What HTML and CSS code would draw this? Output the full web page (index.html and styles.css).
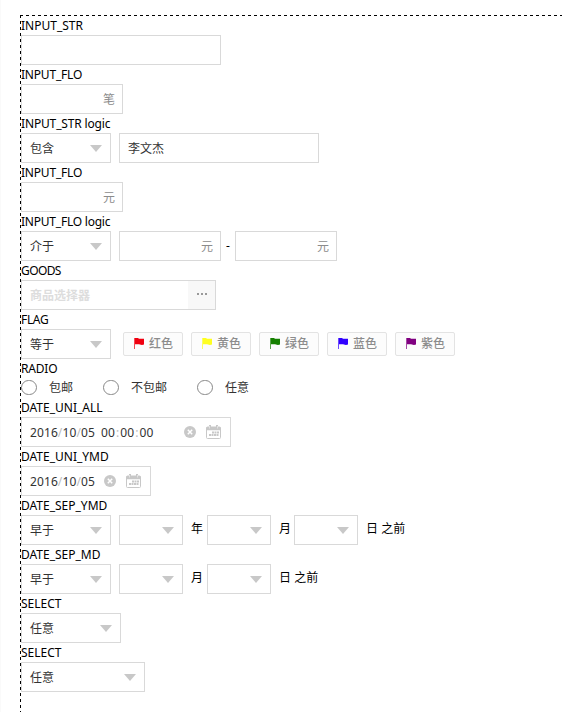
FILE: index.html
```html
<!DOCTYPE html>
<html lang="zh-CN">
<head>
<meta charset="utf-8">
<title>Filter</title>
<link rel="stylesheet" href="styles.css">
</head>
<body>
<svg class="defs" width="0" height="0" aria-hidden="true">
  <symbol id="flag" viewBox="0 0 10 11"><path d="M0 0h1v11H0z" opacity=".7"/><path d="M1 0H4L5 .8H10V6.500L8 7L5 6.200H1z"/></symbol>
  <symbol id="clear" viewBox="0 0 12 12"><circle cx="6" cy="6" r="6" fill="#c8c8c8"/><path d="M3.800 3.800l4.400 4.400M8.200 3.800L3.800 8.200" stroke="#fff" stroke-width="1.500"/></symbol>
  <symbol id="calendar" viewBox="0 0 15 14"><path d="M1.500 2h12a1 1 0 0 1 1 1v9.500a1 1 0 0 1-1 1h-12a1 1 0 0 1-1-1V3a1 1 0 0 1 1-1z" fill="#fff" stroke="#c8c8c8"/><path d="M.5 2h14v3.300H.5zM3 0h2v3H3zM10 0h2v3h-2z" fill="#c8c8c8"/><path d="M3.500 1v2.500M11.500 1v2.500" stroke="#eee" stroke-width=".7"/><path d="M6 6.500h2v2H6zM8.500 6.500h2v2h-2zM11 6.500h2v2h-2zM3 9h2v2H3zM5.500 9h2v2h-2zM8 9h2v2H8zM10.500 9h2v2h-2z" fill="#c8c8c8"/></symbol>
</svg>
<main class="panel">
  <div class="label">INPUT_STR</div>
  <div class="row"><div class="box text"></div></div>
  <div class="label flo">INPUT_FLO</div>
  <div class="row"><div class="box number">笔</div></div>
  <div class="label str-logic">INPUT_STR logic</div>
  <div class="row"><div class="box select">包含</div><div class="box text">李文杰</div></div>
  <div class="label flo">INPUT_FLO</div>
  <div class="row"><div class="box number">元</div></div>
  <div class="label flo-logic">INPUT_FLO logic</div>
  <div class="row"><div class="box select">介于</div><div class="box number">元</div><span class="dash">-</span><div class="box number">元</div></div>
  <div class="label goods-label">GOODS</div>
  <div class="row"><div class="box goods"><span>商品选择器</span><span class="more"><i></i><i></i><i></i></span></div></div>
  <div class="label flag-label">FLAG</div>
  <div class="row"><div class="box select">等于</div>
    <div class="tags">
      <span class="tag"><svg class="red"><use href="#flag"/></svg>红色</span>
      <span class="tag"><svg class="yellow"><use href="#flag"/></svg>黄色</span>
      <span class="tag"><svg class="green"><use href="#flag"/></svg>绿色</span>
      <span class="tag"><svg class="blue"><use href="#flag"/></svg>蓝色</span>
      <span class="tag"><svg class="purple"><use href="#flag"/></svg>紫色</span>
    </div>
  </div>
  <div class="label radio-label">RADIO</div>
  <div class="row radios"><span class="option"><i></i>包邮</span><span class="option"><i></i>不包邮</span><span class="option"><i></i>任意</span></div>
  <div class="label">DATE_UNI_ALL</div>
  <div class="row"><div class="box date full"><span class="digits">2016<b>/</b>10<b>/</b>05</span><span class="digits time">00<b>:</b>00<b>:</b>00</span><svg class="clear"><use href="#clear"/></svg><svg class="calendar"><use href="#calendar"/></svg></div></div>
  <div class="label">DATE_UNI_YMD</div>
  <div class="row"><div class="box date"><span class="digits">2016<b>/</b>10<b>/</b>05</span><svg class="clear"><use href="#clear"/></svg><svg class="calendar"><use href="#calendar"/></svg></div></div>
  <div class="label">DATE_SEP_YMD</div>
  <div class="row"><div class="box select">早于</div><div class="box select small"></div><span class="unit">年</span><div class="box select small"></div><span class="unit month">月</span><div class="box select small"></div><span class="unit">日 之前</span></div>
  <div class="label">DATE_SEP_MD</div>
  <div class="row"><div class="box select">早于</div><div class="box select small"></div><span class="unit">月</span><div class="box select small"></div><span class="unit">日 之前</span></div>
  <div class="label">SELECT</div>
  <div class="row"><div class="box select medium">任意</div></div>
  <div class="label">SELECT</div>
  <div class="row"><div class="box select large">任意</div></div>
</main>
</body>
</html>
```
FILE: styles.css
```css
* { box-sizing: border-box; }
body {
  margin: 0;
  height: 712px;
  overflow: hidden;
  padding: 15px 0 0 20px;
  background: linear-gradient(90deg, #fafafa 1px, #fff 1px);
  font: 12px/19px "Noto Sans", "Noto Sans CJK SC", sans-serif;
  color: #000;
}
.defs { position: absolute; }
.panel {
  height: 720px;
  padding: 1px 0 0 1px;
  background:
    repeating-linear-gradient(90deg, #000 0 3px, transparent 3px 6px) 0 0 / 100% 1px no-repeat,
    repeating-linear-gradient(180deg, #000 0 3px, transparent 3px 6px) 0 0 / 1px 100% no-repeat;
}
.label { height: 19px; line-height: 19px; white-space: nowrap; }
.flo { letter-spacing: -.2px; }
.str-logic { letter-spacing: -.15px; }
.flo-logic { letter-spacing: -.22px; }
.goods-label { letter-spacing: -.6px; }
.flag-label { letter-spacing: -.35px; }
.radio-label { letter-spacing: -.2px; }
.row { display: flex; height: 30px; gap: 8px; white-space: nowrap; }
.box {
  flex: none;
  display: flex;
  align-items: center;
  height: 30px;
  padding: 0 8px;
  border: 1px solid #d9d9d9;
  background: #fff;
  color: #333;
}
.text { width: 200px; }
.number { width: 102px; justify-content: flex-end; padding-right: 7px; color: #8c8c8c; }
.select { width: 90px; justify-content: space-between; }
.select::after {
  content: "";
  margin-left: auto;
  border: solid transparent;
  border-width: 7px 6px 0;
  border-top-color: #c8c8c8;
}
.small { width: 64px; }
.medium { width: 100px; }
.large { width: 124px; }
.dash { width: 14px; margin: 0 -8px; padding-left: 5px; line-height: 30px; }
.goods { width: 195px; padding-right: 0; justify-content: space-between; color: #ddd; font-weight: bold; }
.more { display: flex; align-items: center; justify-content: center; gap: 2px; width: 27px; height: 28px; padding-bottom: 2px; background: #f8f8f8; }
.more i { width: 2px; height: 2px; background: #999; }
.tags { display: flex; gap: 8px; margin: 3px 0 0 4px; }
.tag {
  display: flex;
  align-items: center;
  width: 60px;
  height: 24px;
  padding: 0 0 2px 10px;
  border: 1px solid #e3e3e3;
  border-radius: 2px;
  background: #fcfcfc;
  color: #8c8c8c;
  font-weight: 500;
}
.tag svg { width: 10px; height: 11px; margin-right: 5px; }
.red { fill: #f00010; }
.yellow { fill: #ffff20; }
.green { fill: #158000; }
.blue { fill: #3000ff; }
.purple { fill: #800080; }
.radios { height: 20px; padding-bottom: 2px; gap: 30px; color: #333; }
.option { display: flex; align-items: center; gap: 12px; }
.option i { width: 16px; height: 15px; border: 1px solid #888; border-radius: 8px; }
.date { width: 130px; padding-right: 9px; }
.full { width: 210px; }
.digits { width: 66px; letter-spacing: .1px; }
.digits b { color: #bbb; font-weight: normal; }
.time { margin-left: 5px; }
.time b { margin: 0 1px; }
.clear { width: 12px; height: 12px; margin-left: auto; }
.calendar { width: 15px; height: 14px; margin-left: 10px; }
.unit { line-height: 28px; margin-right: -4px; }
.month { margin-right: -5px; }
```
